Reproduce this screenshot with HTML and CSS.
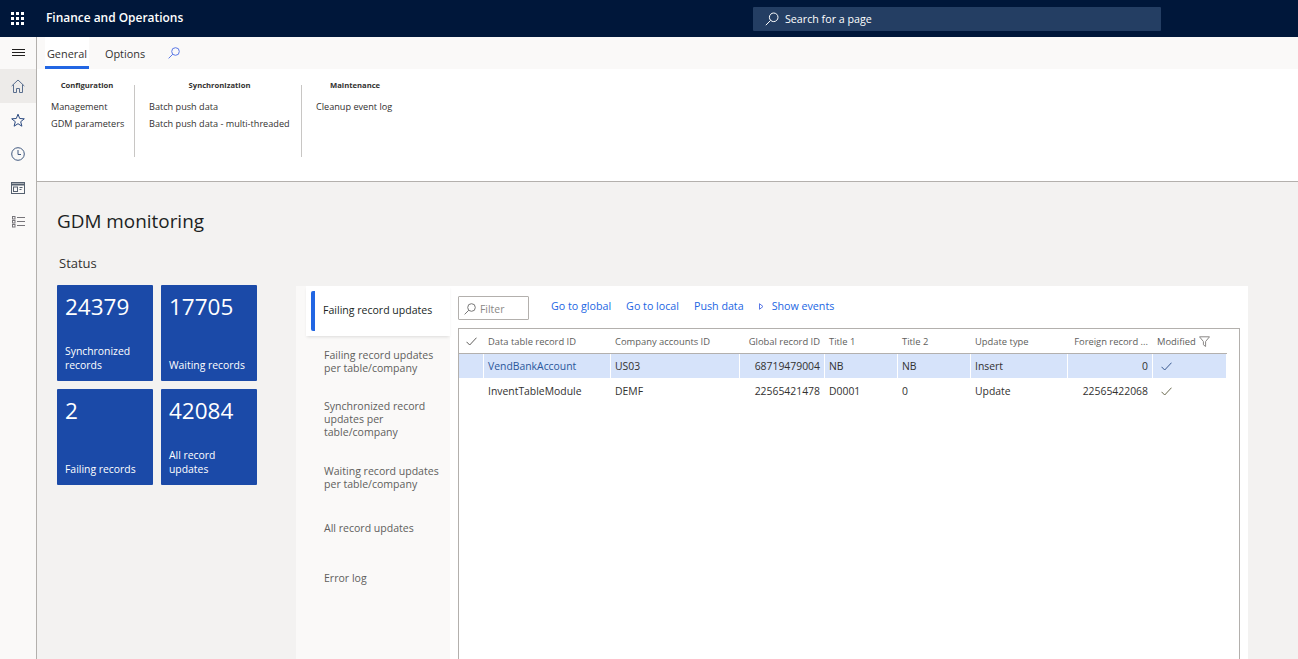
FILE: index.html
```html
<!DOCTYPE html>
<html lang="en">
<head>
<meta charset="utf-8">
<title>GDM monitoring</title>
<link rel="stylesheet" href="styles.css">
</head>
<body>
<header class="topbar">
  <button class="waffle" aria-label="Apps">
    <svg width="14" height="14" viewBox="0 0 14 14" fill="#fff"><rect x="0" y="0" width="3" height="3"/><rect x="5" y="0" width="3" height="3"/><rect x="10" y="0" width="3" height="3"/><rect x="0" y="5" width="3" height="3"/><rect x="5" y="5" width="3" height="3"/><rect x="10" y="5" width="3" height="3"/><rect x="0" y="10" width="3" height="3"/><rect x="5" y="10" width="3" height="3"/><rect x="10" y="10" width="3" height="3"/></svg>
  </button>
  <div class="brand">Finance and Operations</div>
  <div class="search">
    <svg width="14" height="14" viewBox="0 0 14 14" fill="none" stroke="#fff" stroke-width="1"><circle cx="8.7" cy="5.3" r="4.3"/><path d="M5.6 8.4 .8 13.2"/></svg>
    <span>Search for a page</span>
  </div>
</header>
<div class="shell">
  <nav class="rail">
    <div class="rail-item rail-menu"><svg width="13" height="8" viewBox="0 0 13 8" stroke="#201f1e" stroke-width="1"><path d="M0 .5h13M0 3.5h13M0 6.5h13"/></svg></div>
    <div class="rail-item rail-active"><svg width="14" height="14" viewBox="0 0 14 14" fill="none" stroke="#5a6f8f" stroke-width="1"><path d="M.7 7 7 1l6.3 6M2.5 5.5v8h3v-4h3v4h3v-8"/></svg></div>
    <div class="rail-item"><svg width="14" height="14" viewBox="0 0 14 14" fill="none" stroke="#2b4a80" stroke-width="1"><path d="M7 1.2 8.7 5.5l4.6.3-3.6 2.9 1.2 4.5L7 10.7l-3.9 2.5 1.2-4.5L.7 5.8l4.6-.3z"/></svg></div>
    <div class="rail-item"><svg width="14" height="14" viewBox="0 0 14 14" fill="none" stroke="#40597f" stroke-width="1"><circle cx="7" cy="7" r="6.3"/><path d="M7 3v4.5h3"/></svg></div>
    <div class="rail-item"><svg width="14" height="12" viewBox="0 0 14 12" fill="none" stroke="#55606f" stroke-width="1"><rect x=".5" y=".5" width="13" height="11"/><path d="M.5 2.5h13" stroke-width="2"/><rect x="2.5" y="5" width="4" height="4.5"/><path d="M8.5 5.5h3M8.5 7.5h2"/></svg></div>
    <div class="rail-item"><svg width="13" height="12" viewBox="0 0 13 12" fill="none" stroke="#77757a" stroke-width="1"><rect x=".5" y=".5" width="2.5" height="2.5"/><rect x=".5" y="4.5" width="2.5" height="2.5"/><rect x=".5" y="8.5" width="2.5" height="2.5"/><path d="M5 1.5h8M5 5.5h8M5 9.5h8"/></svg></div>
  </nav>
  <div class="main">
    <section class="ribbon">
      <div class="tabstrip">
        <div class="tab tab-on">General</div>
        <div class="tab">Options</div>
        <svg class="tab-search" width="12" height="12" viewBox="0 0 12 12" fill="none" stroke="#5a78e6" stroke-width="1"><circle cx="7.5" cy="4.5" r="3.8"/><path d="M4.8 7.2.6 11.4"/></svg>
      </div>
      <div class="groups">
        <div class="group group-a">
          <h3>Configuration</h3>
          <a>Management</a>
          <a>GDM parameters</a>
        </div>
        <div class="group group-b">
          <h3>Synchronization</h3>
          <a>Batch push data</a>
          <a>Batch push data - multi-threaded</a>
        </div>
        <div class="group group-c">
          <h3>Maintenance</h3>
          <a>Cleanup event log</a>
        </div>
      </div>
    </section>
    <section class="page">
      <h1>GDM monitoring</h1>
      <div class="columns">
        <div class="status">
          <h2>Status</h2>
          <div class="tiles">
            <div class="tile"><span class="num">24379</span><span class="lbl">Synchronized records</span></div>
            <div class="tile"><span class="num">17705</span><span class="lbl">Waiting records</span></div>
            <div class="tile"><span class="num">2</span><span class="lbl">Failing records</span></div>
            <div class="tile"><span class="num">42084</span><span class="lbl">All record updates</span></div>
          </div>
        </div>
        <div class="panel">
          <div class="vtabs">
            <div class="vtab vtab-on"><span>Failing record updates</span></div>
            <div class="vtab vtab-2">Failing record updates per table/company</div>
            <div class="vtab vtab-3">Synchronized record updates per table/company</div>
            <div class="vtab vtab-2b">Waiting record updates per table/company</div>
            <div class="vtab vtab-1">All record updates</div>
            <div class="vtab vtab-1">Error log</div>
          </div>
          <div class="content">
            <div class="toolbar">
              <div class="filter">
                <svg width="12" height="12" viewBox="0 0 12 12" fill="none" stroke="#777" stroke-width="1"><circle cx="7.5" cy="4.5" r="3.8"/><path d="M4.8 7.2.6 11.4"/></svg>
                <span>Filter</span>
              </div>
              <a>Go to global</a>
              <a>Go to local</a>
              <a>Push data</a>
              <a class="more"><svg width="5" height="7" viewBox="0 0 5 7" fill="none" stroke="#5a78e6"><path d="M.5.7 4 3.5.5 6.3z"/></svg>Show events</a>
            </div>
            <div class="grid">
              <div class="row row-head">
                <div class="cell c0"><svg width="11" height="9" viewBox="0 0 11 9" fill="none" stroke="#605e5c"><path d="M.5 4.8 3.7 8 10.5.7"/></svg></div>
                <div class="cell">Data table record ID</div>
                <div class="cell">Company accounts ID</div>
                <div class="cell num-cell">Global record ID</div>
                <div class="cell">Title 1</div>
                <div class="cell">Title 2</div>
                <div class="cell">Update type</div>
                <div class="cell num-cell">Foreign record ...</div>
                <div class="cell c-mod">Modified <svg width="11" height="11" viewBox="0 0 11 11" fill="none" stroke="#8a8886"><path d="M.5.8h10L6.6 5.5v5L4.4 8.8V5.5z"/></svg></div>
              </div>
              <div class="row row-sel">
                <div class="cell c0"></div>
                <div class="cell cell-link">VendBankAccount</div>
                <div class="cell">US03</div>
                <div class="cell num-cell">68719479004</div>
                <div class="cell">NB</div>
                <div class="cell">NB</div>
                <div class="cell">Insert</div>
                <div class="cell num-cell">0</div>
                <div class="cell c-chk"><svg width="11" height="9" viewBox="0 0 11 9" fill="none" stroke="#3a5a90"><path d="M.5 4.8 3.7 8 10.5.7"/></svg></div>
              </div>
              <div class="row">
                <div class="cell c0"></div>
                <div class="cell">InventTableModule</div>
                <div class="cell">DEMF</div>
                <div class="cell num-cell">22565421478</div>
                <div class="cell">D0001</div>
                <div class="cell">0</div>
                <div class="cell">Update</div>
                <div class="cell num-cell">22565422068</div>
                <div class="cell c-chk"><svg width="11" height="9" viewBox="0 0 11 9" fill="none" stroke="#6b6a50"><path d="M.5 4.8 3.7 8 10.5.7"/></svg></div>
              </div>
            </div>
          </div>
        </div>
      </div>
    </section>
  </div>
</div>
</body>
</html>
```

FILE: styles.css
```css
* { box-sizing: border-box; }
html, body { height: 100%; }
body {
  margin: 0;
  overflow: hidden;
  font-family: "Open Sans", "Noto Sans", "Liberation Sans", sans-serif;
  font-size: 10.4px;
  color: #323130;
  display: flex;
  flex-direction: column;
  background: #f3f2f1;
}
a { color: inherit; }
h1, h2, h3 { margin: 0; }

.topbar {
  height: 37px;
  flex: none;
  background: #00173a;
  display: flex;
  align-items: center;
  color: #fff;
}
.waffle {
  width: 37px;
  height: 37px;
  padding: 0 0 0 11px;
  background: none;
  border: 0;
  display: flex;
  align-items: center;
}
.brand {
  margin-left: 9px;
  width: 707px;
  font-size: 11.95px;
  font-weight: 600;
  padding-bottom: 2px;
}
.search {
  width: 408px;
  height: 24px;
  background: #243e63;
  border-radius: 1px;
  display: flex;
  align-items: center;
  gap: 6px;
  padding-left: 12px;
  font-size: 10.7px;
}

.shell { flex: 1; display: flex; min-height: 0; }
.rail {
  width: 37px;
  flex: none;
  background: #faf9f8;
  border-right: 1px solid #b3b0ad;
}
.rail-item {
  height: 34px;
  display: flex;
  align-items: center;
  justify-content: center;
  padding-bottom: 1px;
}
.rail-menu { height: 32px; padding-bottom: 0; }
.rail-active { background: #edebe9; }

.main { flex: 1; min-width: 0; display: flex; flex-direction: column; }
.ribbon {
  flex: none;
  height: 145px;
  background: #fff;
  border-bottom: 1px solid #b3b0ad;
}
.tabstrip {
  height: 32px;
  background: #faf9f8;
  display: flex;
  align-items: center;
  padding-left: 8px;
  font-size: 10.9px;
}
.tab {
  height: 32px;
  display: flex;
  align-items: center;
  justify-content: center;
}
.tab:nth-child(2) { width: 48px; margin-left: 12px; margin-right: 19px; }
.tab-on {
  width: 44px;
  background: #fff;
  border-bottom: 3px solid #2266e3;
  padding-top: 3px;
}

.groups { display: flex; padding-top: 16px; }
.group {
  height: 72px;
  display: flex;
  flex-direction: column;
  border-right: 1px solid #c8c6c4;
  font-size: 9.15px;
}
.group h3 {
  font-size: 7.65px;
  font-weight: 700;
  text-align: center;
  height: 13px;
  line-height: 0;
}
.group a { height: 17px; line-height: 17px; white-space: nowrap; }
.group-a { width: 98px; padding-left: 14px; padding-right: 11px; }
.group-b { width: 167px; padding-left: 14px; padding-right: 11px; }
.group-c { width: 108px; padding-left: 14px; border-right: 0; }
.group-c h3 { text-align: left; padding-left: 14px; }

.page { flex: 1; min-height: 0; padding: 0 50px 0 20px; }
.page h1 {
  font-size: 18.9px;
  font-weight: 500;
  line-height: 26px;
  margin-top: 26px;
  color: #201f1e;
}
.columns { display: flex; margin-top: 21px; height: 420px; }
.status { width: 239px; flex: none; }
.status h2 {
  font-size: 13px;
  font-weight: 500;
  line-height: 17px;
  padding-left: 2px;
  margin-bottom: 13px;
}
.tiles { display: grid; grid-template-columns: 96px 96px; grid-auto-rows: 96px; gap: 8px; }
.tile {
  background: #1b4aa8;
  border-radius: 1px;
  color: #fff;
  padding: 9px 7px 9px 8px;
  display: flex;
  flex-direction: column;
  justify-content: space-between;
}
.num { font-size: 22.5px; line-height: 26px; }
.lbl { font-size: 10.4px; line-height: 14px; }

.panel {
  margin-top: 31px;
  flex: 1;
  display: flex;
  background: #fff;
  height: 400px;
}
.vtabs { width: 154px; flex: none; background: #faf9f8; color: #605e5c; font-size: 10.55px; }
.vtab { padding-left: 28px; padding-right: 8px; line-height: 13px; }
.vtab-on {
  height: 50px;
  background: #fff;
  margin-left: 10px;
  padding: 5px 0 0 5px;
  color: #201f1e;
  box-shadow: 0 2px 3px -1px rgba(0,0,0,.12);
  margin-bottom: 13px;
}
.vtab-on span {
  display: block;
  height: 40px;
  line-height: 38px;
  border-left: 4px solid #2266e3;
  border-radius: 2px;
  padding-left: 8px;
  white-space: nowrap;
}
.vtab-2 { height: 51px; }
.vtab-3 { height: 65px; }
.vtab-2b { height: 57px; }
.vtab-1 { height: 50px; }

.content { flex: 1; padding: 10px 8px 0 8px; min-width: 0; }
.toolbar {
  height: 24px;
  display: flex;
  align-items: center;
  gap: 15px;
  color: #2266e3;
  font-size: 10.7px;
  margin-bottom: 8px;
}
.toolbar a { position: relative; top: -2px; }
.toolbar a.more { display: flex; align-items: center; gap: 8px; }
.filter {
  width: 71px;
  height: 24px;
  background: #fff;
  border: 1px solid #b3b0ad;
  border-radius: 1px;
  display: flex;
  align-items: center;
  gap: 4px;
  padding: 1px 0 0 5px;
  font-size: 10.4px;
  color: #8a8886;
  margin-right: 7px;
}
.grid {
  height: 340px;
  border: 1px solid #b3b0ad;
  border-bottom: 0;
  width: 782px;
}
.row {
  width: 768px;
  height: 25px;
  display: grid;
  grid-template-columns: 25px 127px 129px 85px 73px 73px 97px 85px 74px;
  align-items: stretch;
}
.row-head {
  color: #605e5c;
  border-bottom: 1px solid #b3b0ad;
  font-size: 9.4px;
}
.cell {
  padding: 0 4px;
  margin-right: 1px;
  display: flex;
  align-items: center;
  white-space: nowrap;
  overflow: hidden;
  height: 24px;
}
.c0 { padding: 0 0 0 7px; }
.num-cell { justify-content: flex-end; }
.c-mod { gap: 3px; }
.c-chk { padding-left: 8px; }
.row-sel .cell { background: #d6e3fa; }
.cell-link { color: #2b579a; }
```
